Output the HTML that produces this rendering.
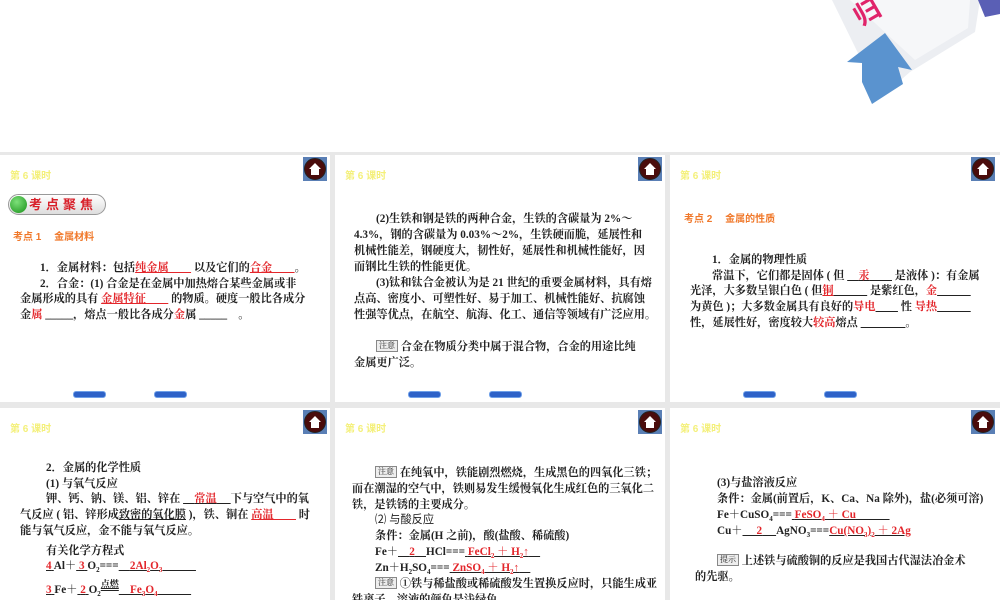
<!DOCTYPE html>
<html><head><meta charset="utf-8"><style>
*{margin:0;padding:0;box-sizing:border-box}
body{width:1000px;height:600px;background:#fff;position:relative;overflow:hidden;font-family:"Liberation Serif","Noto Serif CJK SC",serif}
.gray{position:absolute;left:0;top:152px;width:1000px;height:448px;background:#e8e8e8}
.p{position:absolute;background:#fff;overflow:hidden}
.ks{position:absolute;left:10px;top:12px;font:bold 10px "Liberation Sans","Noto Sans CJK SC",sans-serif;color:#f4f07a}
.home{position:absolute;right:3px;top:2px;width:24px;height:24px;background:#5a7fb5}
.home i{position:absolute;left:1px;top:1px;width:22px;height:22px;border-radius:50%;background:#4a0c0c;border:1px solid #222}
.home svg{position:absolute;left:5px;top:5px}
.t{position:absolute;white-space:nowrap;font-size:11.2px;font-weight:bold;color:#222;line-height:16px}
.r{color:#e3262b}
.o{color:#f0782a;font-family:"Liberation Sans","Noto Sans CJK SC",sans-serif}
.u{text-decoration:underline}
.btn{position:absolute;width:33px;height:7px;border-radius:3px;background:#2e62c8;border:1px solid #6fa0e8}
.note{display:inline-block;font-size:8px;border:1px solid #888;background:#eee;padding:0 2px;line-height:10px;font-weight:normal;vertical-align:2px}
.k{font-family:"Liberation Sans","Noto Sans CJK SC",sans-serif;font-weight:normal;}
</style></head><body>
<svg style="position:absolute;left:820px;top:0" width="180" height="110">
<polygon points="12,0 160,0 155,32 90,72 60,98" fill="#eceef2"/>
<polygon points="30,0 150,0 148,28 95,60" fill="#f6f7f9"/>
<polygon points="158,0 180,0 180,14 165,17" fill="#5a5fb5"/>
<text x="36" y="20" font-size="26" font-weight="bold" fill="#e0246a" transform="rotate(-30 50 15)" font-family="Noto Sans CJK SC">归</text>
<polygon points="65,33 27,62 42,63 42,82 52,104 83,84 78,67 92,70" fill="#5a93cf"/>
</svg>
<div class="gray"></div>

<div class="p" style="left:0;top:155px;width:330px;height:247px">
<div class="ks">第 6 课时</div>
<div class="home"><i></i><svg width="14" height="14"><polygon points="7,1 1,7 3,7 3,13 11,13 11,7 13,7" fill="#fff"/></svg></div>
<div style="position:absolute;left:8px;top:39px;width:98px;height:21px;border:1px solid #999;border-radius:11px;background:linear-gradient(#fff,#ddd)"></div>
<div style="position:absolute;left:10px;top:41px;width:17px;height:17px;border-radius:50%;background:radial-gradient(circle at 40% 35%,#7de07a,#189018)"></div>
<div class="t" style="left:29px;top:41px;font-size:13px;color:#d8202a;letter-spacing:4px;font-family:'Noto Sans CJK SC',sans-serif">考点聚焦</div>
<div class="t o" style="left:13px;top:75px;font-size:10px">考点 1　 金属材料</div>
<div class="t" style="left:40px;top:105px">1．金属材料：包括<span class="r u">纯金属　　</span> 以及它们的<span class="r u">合金　　</span>。</div>
<div class="t" style="left:40px;top:121px">2．合金：(1) 合金是在金属中加热熔合某些金属或非</div>
<div class="t" style="left:20px;top:136px">金属形成的具有 <span class="r u">金属特征　　</span> 的物质。硬度一般比各成分</div>
<div class="t" style="left:20px;top:152px">金<span class="r">属</span> _____，熔点一般比各成分<span class="r">金</span>属 _____　。</div>
<div class="btn" style="left:73px;top:236px"></div>
<div class="btn" style="left:154px;top:236px"></div>
</div>

<div class="p" style="left:335px;top:155px;width:330px;height:247px">
<div class="ks">第 6 课时</div>
<div class="home"><i></i><svg width="14" height="14"><polygon points="7,1 1,7 3,7 3,13 11,13 11,7 13,7" fill="#fff"/></svg></div>
<div class="t" style="left:41px;top:56px">(2)生铁和钢是铁的两种合金，生铁的含碳量为 2%～</div>
<div class="t" style="left:19px;top:72px">4.3%，钢的含碳量为 0.03%～2%，生铁硬而脆，延展性和</div>
<div class="t" style="left:19px;top:88px">机械性能差，钢硬度大，韧性好，延展性和机械性能好，因</div>
<div class="t" style="left:19px;top:104px">而钢比生铁的性能更优。</div>
<div class="t" style="left:41px;top:120px">(3)钛和钛合金被认为是 21 世纪的重要金属材料，具有熔</div>
<div class="t" style="left:19px;top:136px">点高、密度小、可塑性好、易于加工、机械性能好、抗腐蚀</div>
<div class="t" style="left:19px;top:152px">性强等优点，在航空、航海、化工、通信等领域有广泛应用。</div>
<div class="t" style="left:41px;top:184px"><span class="note">注意</span> 合金在物质分类中属于混合物，合金的用途比纯</div>
<div class="t" style="left:19px;top:200px">金属更广泛。</div>
<div class="btn" style="left:73px;top:236px"></div>
<div class="btn" style="left:154px;top:236px"></div>
</div>

<div class="p" style="left:670px;top:155px;width:330px;height:247px">
<div class="ks">第 6 课时</div>
<div class="home" style="right:5px"><i></i><svg width="14" height="14"><polygon points="7,1 1,7 3,7 3,13 11,13 11,7 13,7" fill="#fff"/></svg></div>
<div class="t o" style="left:14px;top:57px;font-size:10px">考点 2　 金属的性质</div>
<div class="t" style="left:42px;top:97px">1．金属的物理性质</div>
<div class="t" style="left:42px;top:113px">常温下，它们都是固体 ( 但 <span class="u">　<span class="r">汞</span>　　</span> 是液体 )：有金属</div>
<div class="t" style="left:20px;top:128px">光泽，大多数呈银白色 ( 但<span class="r u">铜</span><span class="u">　　　</span> 是紫红色，<span class="r">金</span><span class="u">　　　</span></div>
<div class="t" style="left:20px;top:144px">为黄色 )；大多数金属具有良好的<span class="r">导电</span><span class="u">　　</span> 性 <span class="r">导热</span><span class="u">　　　</span></div>
<div class="t" style="left:20px;top:160px">性，延展性好，密度较大<span class="r">较高</span>熔点 <span class="u">　　　　</span>。</div>
<div class="btn" style="left:73px;top:236px"></div>
<div class="btn" style="left:154px;top:236px"></div>
</div>

<div class="p" style="left:0;top:408px;width:330px;height:192px">
<div class="ks">第 6 课时</div>
<div class="home"><i></i><svg width="14" height="14"><polygon points="7,1 1,7 3,7 3,13 11,13 11,7 13,7" fill="#fff"/></svg></div>
<div class="t" style="left:46px;top:52px">2．金属的化学性质</div>
<div class="t" style="left:46px;top:68px">(1) 与氧气反应</div>
<div class="t" style="left:46px;top:83px">钾、钙、钠、镁、铝、锌在 <span class="u">　<span class="r">常温</span>　 </span> 下与空气中的氧</div>
<div class="t" style="left:20px;top:99px">气反应 ( 铝、锌形成<span class="u">致密的氧化膜</span> )，铁、铜在 <span class="r u">高温　　</span> 时</div>
<div class="t" style="left:20px;top:115px">能与氧气反应，金不能与氧气反应。</div>
<div class="t" style="left:46px;top:135px">有关化学方程式</div>
<div class="t" style="left:46px;top:150px"><span class="u"> <span class="r">4</span> </span>Al＋<span class="u"> <span class="r">3</span> </span>O<sub style="font-size:7px">2</sub>===<span class="u">　<span class="r">2Al<sub style="font-size:7px">2</sub>O<sub style="font-size:7px">3</sub></span>　　　</span></div>
<div class="t" style="left:46px;top:168px"><span class="u"> <span class="r">3</span> </span>Fe＋<span class="u"> <span class="r">2</span> </span>O<sub style="font-size:7px">2</sub><span style="font-size:9px;vertical-align:6px;text-decoration:underline double">点燃</span><span class="u">　<span class="r">Fe<sub style="font-size:7px">3</sub>O<sub style="font-size:7px">4</sub></span>　　　</span></div>
</div>

<div class="p" style="left:335px;top:408px;width:330px;height:192px">
<div class="ks">第 6 课时</div>
<div class="home"><i></i><svg width="14" height="14"><polygon points="7,1 1,7 3,7 3,13 11,13 11,7 13,7" fill="#fff"/></svg></div>
<div class="t" style="left:40px;top:57px"><span class="note">注意</span> 在纯氧中，铁能剧烈燃烧，生成黑色的四氧化三铁；</div>
<div class="t" style="left:17px;top:73px">而在潮湿的空气中，铁则易发生缓慢氧化生成红色的三氧化二</div>
<div class="t" style="left:17px;top:89px">铁，是铁锈的主要成分。</div>
<div class="t k" style="left:40px;top:104px">⑵ 与酸反应</div>
<div class="t" style="left:40px;top:120px">条件：金属(H 之前)，酸(盐酸、稀硫酸)</div>
<div class="t" style="left:40px;top:136px">Fe＋<span class="u">　<span class="r">2</span>　</span>HCl===<span class="u"> <span class="r">FeCl<sub style="font-size:7px">2</sub> ＋ H<sub style="font-size:7px">2</sub>↑</span>　</span></div>
<div class="t" style="left:40px;top:152px">Zn＋H<sub style="font-size:7px">2</sub>SO<sub style="font-size:7px">4</sub>===<span class="u"> <span class="r">ZnSO<sub style="font-size:7px">4</sub> ＋ H<sub style="font-size:7px">2</sub>↑</span>　</span></div>
<div class="t" style="left:40px;top:168px"><span class="note">注意</span> ①铁与稀盐酸或稀硫酸发生置换反应时，只能生成亚</div>
<div class="t" style="left:17px;top:184px">铁离子，溶液的颜色是浅绿色。</div>
</div>

<div class="p" style="left:670px;top:408px;width:330px;height:192px">
<div class="ks">第 6 课时</div>
<div class="home" style="right:5px"><i></i><svg width="14" height="14"><polygon points="7,1 1,7 3,7 3,13 11,13 11,7 13,7" fill="#fff"/></svg></div>
<div class="t" style="left:47px;top:67px">(3)与盐溶液反应</div>
<div class="t" style="left:47px;top:83px">条件：金属(前置后，K、Ca、Na 除外)，盐(必须可溶)</div>
<div class="t" style="left:47px;top:99px">Fe＋CuSO<sub style="font-size:7px">4</sub>===<span class="u"> <span class="r">FeSO<sub style="font-size:7px">4</sub> ＋ Cu</span>　　　</span></div>
<div class="t" style="left:47px;top:115px">Cu＋<span class="u">　 <span class="r">2</span> 　</span>AgNO<sub style="font-size:7px">3</sub>===<span class="u"><span class="r">Cu(NO<sub style="font-size:7px">3</sub>)<sub style="font-size:7px">2</sub> ＋ 2Ag</span> </span></div>
<div class="t" style="left:47px;top:145px"><span class="note">提示</span> 上述铁与硫酸铜的反应是我国古代湿法冶金术</div>
<div class="t" style="left:25px;top:161px">的先驱。</div>
</div>
</body></html>
